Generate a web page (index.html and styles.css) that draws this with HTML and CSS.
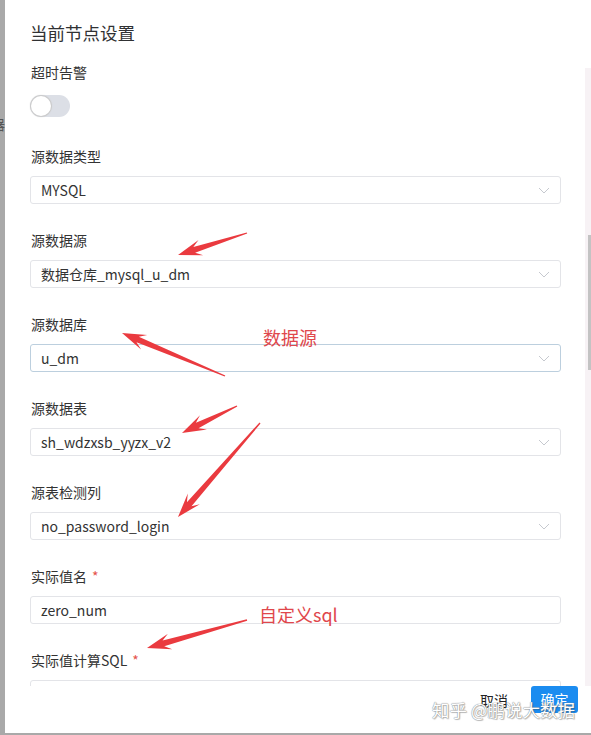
FILE: index.html
```html
<!DOCTYPE html>
<html lang="zh-CN">
<head>
<meta charset="utf-8">
<title>当前节点设置</title>
<link rel="stylesheet" href="styles.css">
</head>
<body>
<div class="page">
  <div class="strip"><span class="strip-glyph">器</span></div>
  <div class="panel">
    <div class="main">
      <div class="content">
        <div class="title">当前节点设置</div>
        <div class="label">超时告警</div>
        <div class="switch"><span class="knob"></span></div>

        <div class="field">
          <div class="label">源数据类型</div>
          <div class="select"><span>MYSQL</span><svg class="chev" width="12" height="7" viewBox="0 0 12 7"><polyline points="1,1 6,6 11,1" fill="none" stroke="#c6c9cf" stroke-width="1"/></svg></div>
        </div>
        <div class="field">
          <div class="label">源数据源</div>
          <div class="select"><span>数据仓库_mysql_u_dm</span><svg class="chev" width="12" height="7" viewBox="0 0 12 7"><polyline points="1,1 6,6 11,1" fill="none" stroke="#c6c9cf" stroke-width="1"/></svg></div>
        </div>
        <div class="field">
          <div class="label">源数据库</div>
          <div class="select focus"><span>u_dm</span><svg class="chev" width="12" height="7" viewBox="0 0 12 7"><polyline points="1,1 6,6 11,1" fill="none" stroke="#c6c9cf" stroke-width="1"/></svg></div>
        </div>
        <div class="field">
          <div class="label">源数据表</div>
          <div class="select"><span>sh_wdzxsb_yyzx_v2</span><svg class="chev" width="12" height="7" viewBox="0 0 12 7"><polyline points="1,1 6,6 11,1" fill="none" stroke="#c6c9cf" stroke-width="1"/></svg></div>
        </div>
        <div class="field">
          <div class="label">源表检测列</div>
          <div class="select"><span>no_password_login</span><svg class="chev" width="12" height="7" viewBox="0 0 12 7"><polyline points="1,1 6,6 11,1" fill="none" stroke="#c6c9cf" stroke-width="1"/></svg></div>
        </div>
        <div class="field">
          <div class="label">实际值名<span class="req">*</span></div>
          <div class="select"><span>zero_num</span></div>
        </div>
        <div class="field">
          <div class="label">实际值计算SQL<span class="req">*</span></div>
          <div class="select tall"></div>
        </div>
      </div>
      <div class="scrollbar"><div class="thumb"></div></div>
    </div>
    <div class="footer">
      <span class="cancel">取消</span>
      <span class="ok">确定</span>
    </div>
  </div>
</div>

<div class="watermark">知乎 @鹏说大数据</div>

<svg class="arrows" width="591" height="735" viewBox="0 0 591 735">
  <polygon points="247.2,233.5 195.1,252.7 203.3,255.3 178,255 198.5,240.1 193.3,246.9 246.8,232.5"/>
  <polygon points="225.3,375.4 138.8,336.8 147.2,334.9 122,333 141.1,349.6 136.5,342.3 224.7,376.6"/>
  <polygon points="236.7,405.4 195.9,422.8 200.0,415.2 182,433 207.0,429.6 198.5,428.2 237.3,406.6"/>
  <polygon points="259.5,422.5 186.9,502.2 187.8,493.6 178,517 199.8,504.2 191.5,506.2 260.5,423.5"/>
  <polygon points="246.8,619.3 162.6,640.5 167.9,633.8 147,648 172.3,649.2 164.2,646.3 247.2,620.7"/>
</svg>
<div class="note note-ds">数据源</div>
<div class="note note-sql">自定义sql</div>
</body>
</html>
```

FILE: styles.css
```css
html, body {
  margin: 0;
  padding: 0;
}

body {
  width: 591px;
  height: 735px;
  background: #a9a9a9;
  font-family: "Noto Sans CJK SC", "Noto Sans", sans-serif;
  position: relative;
  overflow: hidden;
}

.page {
  display: flex;
  height: 733px;
}

.strip {
  width: 5px;
  overflow: hidden;
  padding-top: 116px;
  box-sizing: border-box;
}

.strip-glyph {
  display: block;
  margin-left: -9px;
  font-size: 14px;
  line-height: 16px;
  color: #555;
}

.panel {
  width: 586px;
  background: #fff;
  display: flex;
  flex-direction: column;
}

.main {
  height: 686px;
  display: flex;
  overflow: hidden;
}

.content {
  width: 580px;
  padding: 21px 0 0 25px;
  box-sizing: border-box;
}

.scrollbar {
  width: 6px;
  margin-top: 68px;
  height: 618px;
  background: #f7f2f5;
}

.thumb {
  margin-top: 167px;
  margin-left: 3px;
  width: 3px;
  height: 135px;
  background: #c3c3c3;
}

.title {
  font-size: 17.5px;
  line-height: 24px;
  color: #303133;
  margin-bottom: 17px;
}

.label {
  font-size: 14px;
  line-height: 20px;
  color: #333;
  margin-bottom: 13px;
  padding-left: 1px;
}

.field .label {
  margin-bottom: 10px;
}

.req {
  color: #e5534b;
  margin-left: 5px;
}

.switch {
  width: 40px;
  height: 22px;
  border-radius: 11px;
  background: #dcdfe6;
  margin-bottom: 29px;
  display: flex;
  align-items: center;
  padding-left: 1px;
  box-sizing: border-box;
}

.knob {
  width: 20px;
  height: 20px;
  border-radius: 50%;
  background: #fff;
  box-shadow: 0 0 1px 1px #c9c9c9;
}

.field {
  margin-bottom: 26px;
}

.select {
  width: 531px;
  height: 28px;
  border: 1px solid #e3e4e8;
  border-radius: 3px;
  box-sizing: border-box;
  display: flex;
  align-items: center;
  justify-content: space-between;
  padding: 0 10px 0 10px;
  font-size: 14px;
  color: #333;
}

.select.focus {
  border-color: #bccfde;
}

.select.tall {
  height: 60px;
}

.chev {
  display: block;
}

.footer {
  flex: 1;
  display: flex;
  justify-content: flex-end;
  align-items: flex-start;
  padding-right: 13px;
}

.cancel {
  height: 27px;
  line-height: 27px;
  font-size: 14px;
  color: #222;
  margin-right: 23px;
  margin-top: 1px;
}

.ok {
  width: 47px;
  height: 27px;
  line-height: 27px;
  text-align: center;
  font-size: 14px;
  color: #fff;
  background: #1b8cf0;
  border-radius: 3px;
}

.watermark {
  position: absolute;
  left: 432px;
  top: 698px;
  font-size: 17.5px;
  line-height: 24px;
  color: #fff;
  white-space: nowrap;
  text-shadow: 0 0 1px #8a8a8a, 0 0 1px #8a8a8a, 1px 1px 1px rgba(0, 0, 0, 0.25);
}

.arrows {
  position: absolute;
  left: 0;
  top: 0;
  pointer-events: none;
}

.arrows polygon {
  fill: #ea3a3f;
}

.note {
  position: absolute;
  font-size: 18px;
  line-height: 24px;
  color: #e0474c;
  white-space: nowrap;
}

.note-ds {
  left: 263px;
  top: 325px;
}

.note-sql {
  left: 259px;
  top: 602px;
}
```
